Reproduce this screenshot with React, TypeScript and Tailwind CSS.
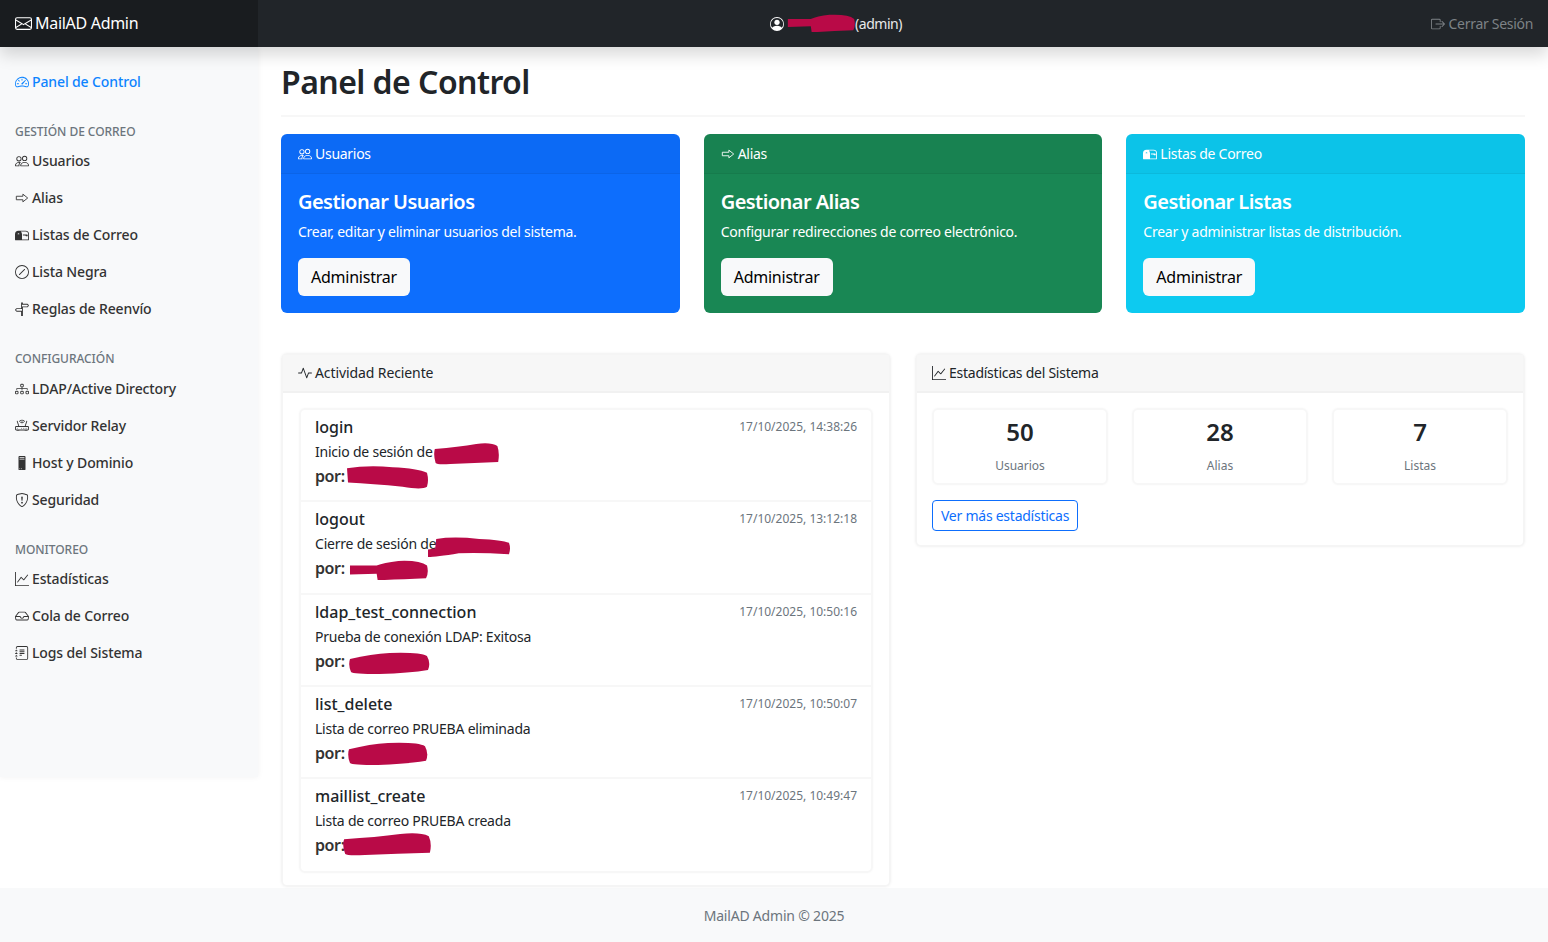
import {
  BsActivity,
  BsBoxArrowRight,
  BsDiagram3,
  BsEnvelope,
  BsGraphUp,
  BsInbox,
  BsJournalText,
  BsMailbox2,
  BsPc,
  BsPeople,
  BsPersonCircle,
  BsRouter,
  BsShieldExclamation,
  BsSignpostSplit,
  BsSlashCircle,
  BsSpeedometer2,
} from 'react-icons/bs'
import type { ReactNode } from 'react'

function AliasIcon({ className = '' }: { className?: string }) {
  return (
    <svg viewBox="0 0 16 16" width="14" height="14" fill="none" stroke="currentColor" strokeWidth="1" className={className}>
      <path d="M1.5 6h7.5V3.6L14.5 8 9 12.4V10H1.5z" />
    </svg>
  )
}

// censored names in the screenshot, hand scribbled marks
function Redact({ className, d }: { className: string; d: string }) {
  return (
    <svg viewBox="0 0 80 22" preserveAspectRatio="none" className={`absolute ${className}`}>
      <path d={d} fill="#b90a47" />
    </svg>
  )
}

const blobRound = 'M1 6 Q30 4 52 1 Q70 -1 78 3 Q81 10 79 19 Q50 20 20 21 Q4 22 2 20 Q-1 12 1 6z'
const blobTail = 'M0 3 Q20 0 45 2 Q70 3 79 7 Q81 14 79 20 Q74 23 55 20 Q25 17 1 16z'
const blobStep = 'M1 6 L28 6 Q35 3 50 1 Q72 0 79 6 Q81 14 78 20 Q55 21 36 22 L29 22 L28 15 L1 16z'
const blobLift = 'M8 2 Q25 -1 50 2 Q72 3 79 6 Q81 12 79 18 Q50 16 30 17 Q8 21 0 21 L0 13 L7 12z'
const blobFull = 'M1 7 Q22 2 40 1 Q70 0 77 4 Q81 11 78 18 Q60 21 30 22 Q4 22 2 20 Q-1 13 1 7z'

function NavItem({ icon, label, active }: { icon: ReactNode; label: string; active?: boolean }) {
  return (
    <a
      className={`flex h-[37px] items-center gap-[3px] pl-[15px] text-sm font-medium tracking-[-0.12px] ${active ? 'text-[#0d84ff]' : 'text-[#333333]'}`}
    >
      <span className="flex w-[14px] justify-center text-sm">{icon}</span>
      {label}
    </a>
  )
}

function SectionTitle({ children, className = '' }: { children: ReactNode; className?: string }) {
  return <h6 className={`pl-[15px] text-xs font-medium tracking-[-0.05px] text-[#6c757d] ${className}`}>{children}</h6>
}

function ActionCard({
  color,
  header,
  icon,
  title,
  text,
}: {
  color: string
  header: string
  icon: ReactNode
  title: string
  text: string
}) {
  return (
    <div className={`h-[179px] overflow-hidden rounded-md text-white ${color}`}>
      <div className="flex h-10 items-center gap-[3px] border-b border-black/5 bg-black/[0.03] px-[17px] text-sm tracking-[-0.28px]">
        {icon}
        {header}
      </div>
      <div className="px-[17px] pt-4">
        <h5 className="text-xl leading-6 font-semibold tracking-[-0.55px]">{title}</h5>
        <p className="mt-[7px] text-sm leading-[21px] tracking-[-0.26px]">{text}</p>
        <button className="mt-[16px] h-[38px] rounded-md bg-[#f8f9fa] px-[13px] text-base tracking-[-0.24px] text-black">Administrar</button>
      </div>
    </div>
  )
}

function LogRow({ title, time, text }: { title: string; time: string; text: string }) {
  return (
    <div className="relative h-[92.25px] border-b-2 border-[#f7f7f7] pt-[6px] pr-[14px] pl-[14px] last:border-b-0">
      <div className="flex items-start justify-between">
        <h5 className="text-base leading-[22px] font-medium text-[#212529]">{title}</h5>
        <small className="mt-[1px] text-xs leading-[20px] text-[#6c757d]">{time}</small>
      </div>
      <p className="mt-[3px] text-sm leading-[21px] tracking-[-0.22px] text-[#212529]">{text}</p>
      <p className="mt-[2px] text-base leading-[24px] font-semibold tracking-[-0.4px] text-[#333333]">por:</p>
    </div>
  )
}

function StatBox({ value, label }: { value: string; label: string }) {
  return (
    <div className="h-[77px] rounded-md border-2 border-[#f7f7f7] pt-[8px] text-center shadow-[0_0_2px_rgba(0,0,0,0.04)]">
      <div className="text-2xl leading-7 font-semibold text-[#212529]">{value}</div>
      <div className="mt-[11px] text-xs leading-[18px] text-[#6c757d]">{label}</div>
    </div>
  )
}

export default function App() {
  return (
    <div className="min-h-[942px] bg-white font-['Noto_Sans',sans-serif] text-[#212529]">
      <header className="relative z-10 flex h-[47px] items-center bg-[#212529] shadow-[0_8px_16px_rgba(0,0,0,0.15)]">
        <a className="flex h-full w-[258px] items-center gap-[3px] bg-[#191c1f] pb-[1px] pl-[15px] text-base tracking-[-0.3px] text-white">
          <BsEnvelope className="h-[17px] w-[17px]" />
          MailAD Admin
        </a>
        <div className="flex flex-1 items-center pl-[512px] text-sm tracking-[-0.45px] text-[#e8e9ea]">
          <BsPersonCircle className="h-[14px] w-[14px] text-white" />
          <span className="ml-[71px]">(admin)</span>
        </div>
        <a className="flex items-center gap-[4px] pr-[15px] text-sm tracking-[-0.3px] text-[#7d8286]">
          <BsBoxArrowRight className="h-[14px] w-[14px]" />
          Cerrar Sesión
        </a>
        <Redact className="top-[14px] left-[787px] h-[18px] w-[68px]" d={blobStep} />
      </header>

      <div className="flex items-start">
        <aside className="h-[730px] w-[258px] shrink-0 bg-[#f8f9fa] pt-4 shadow-[0_0_6px_rgba(0,0,0,0.06)]">
          <NavItem active icon={<BsSpeedometer2 />} label="Panel de Control" />
          <SectionTitle className="mt-[23px] mb-[1px] leading-[18px]">GESTIÓN DE CORREO</SectionTitle>
          <NavItem icon={<BsPeople />} label="Usuarios" />
          <NavItem icon={<AliasIcon />} label="Alias" />
          <NavItem icon={<BsMailbox2 />} label="Listas de Correo" />
          <NavItem icon={<BsSlashCircle />} label="Lista Negra" />
          <NavItem icon={<BsSignpostSplit />} label="Reglas de Reenvío" />
          <SectionTitle className="mt-[23px] mb-[2px] leading-[18px]">CONFIGURACIÓN</SectionTitle>
          <NavItem icon={<BsDiagram3 />} label="LDAP/Active Directory" />
          <NavItem icon={<BsRouter />} label="Servidor Relay" />
          <NavItem icon={<BsPc />} label="Host y Dominio" />
          <NavItem icon={<BsShieldExclamation />} label="Seguridad" />
          <SectionTitle className="mt-[23px] mb-[1px] leading-[18px]">MONITOREO</SectionTitle>
          <NavItem icon={<BsGraphUp />} label="Estadísticas" />
          <NavItem icon={<BsInbox />} label="Cola de Correo" />
          <NavItem icon={<BsJournalText />} label="Logs del Sistema" />
        </aside>

        <main className="flex-1 px-[23px] pb-px">
          <div className="flex h-[70px] items-start border-b-2 border-[#f7f7f7] pt-4">
            <h1 className="text-[32px] leading-[38px] font-semibold tracking-[-0.55px] text-[#212529]">Panel de Control</h1>
          </div>
          <div className="mt-[17px] grid grid-cols-3 gap-6">
            <ActionCard color="bg-[#0d6efd]" header="Usuarios" icon={<BsPeople />} title="Gestionar Usuarios" text="Crear, editar y eliminar usuarios del sistema." />
            <ActionCard color="bg-[#198754]" header="Alias" icon={<AliasIcon />} title="Gestionar Alias" text="Configurar redirecciones de correo electrónico." />
            <ActionCard color="bg-[#0dcaf0]" header="Listas de Correo" icon={<BsMailbox2 />} title="Gestionar Listas" text="Crear y administrar listas de distribución." />
          </div>

          <div className="mt-10 grid grid-cols-2 items-start gap-6">
            <section className="relative h-[534px] rounded-md border-2 border-[#f5f5f5] shadow-[0_0_3px_rgba(0,0,0,0.05)]">
              <div className="flex h-[38px] items-center gap-[3px] border-b-2 border-[#f1f1f1] bg-[#f7f7f7] px-[15px] text-sm tracking-[-0.1px]">
                <BsActivity />
                Actividad Reciente
              </div>
              <div className="mx-4 mt-[15px] rounded-md border-2 border-[#f7f7f7] shadow-[0_0_2px_rgba(0,0,0,0.04)]">
                <LogRow title="login" time="17/10/2025, 14:38:26" text="Inicio de sesión de" />
                <LogRow title="logout" time="17/10/2025, 13:12:18" text="Cierre de sesión de" />
                <LogRow title="ldap_test_connection" time="17/10/2025, 10:50:16" text="Prueba de conexión LDAP: Exitosa" />
                <LogRow title="list_delete" time="17/10/2025, 10:50:07" text="Lista de correo PRUEBA eliminada" />
                <LogRow title="maillist_create" time="17/10/2025, 10:49:47" text="Lista de correo PRUEBA creada" />
              </div>
              <Redact className="top-[88px] left-[151px] h-[22px] w-[65px]" d={blobRound} />
              <Redact className="top-[110px] left-[64px] h-[24px] w-[81px]" d={blobTail} />
              <Redact className="top-[182px] left-[145px] h-[21px] w-[82px]" d={blobLift} />
              <Redact className="top-[205px] left-[66px] h-[20px] w-[79px]" d={blobStep} />
              <Redact className="top-[297px] left-[66px] h-[22px] w-[81px]" d={blobFull} />
              <Redact className="top-[387px] left-[65px] h-[23px] w-[80px]" d={blobFull} />
              <Redact className="top-[478px] left-[60px] h-[23px] w-[88px]" d={blobRound} />
            </section>

            <section className="h-[194px] rounded-md border-2 border-[#f5f5f5] shadow-[0_0_3px_rgba(0,0,0,0.05)]">
              <div className="flex h-[38px] items-center gap-[3px] border-b-2 border-[#f1f1f1] bg-[#f7f7f7] px-[15px] text-sm tracking-[-0.25px]">
                <BsGraphUp />
                Estadísticas del Sistema
              </div>
              <div className="px-[15px] pt-[15px]">
                <div className="grid grid-cols-3 gap-6">
                  <StatBox value="50" label="Usuarios" />
                  <StatBox value="28" label="Alias" />
                  <StatBox value="7" label="Listas" />
                </div>
                <button className="mt-[15px] h-[31px] rounded border border-[#0d6efd] px-2 text-sm tracking-[-0.25px] text-[#0d6efd]">Ver más estadísticas</button>
              </div>
            </section>
          </div>
        </main>
      </div>

      <footer className="h-[54px] bg-[#f8f9fa] text-center text-sm leading-[56px] tracking-[-0.2px] text-[#6c757d]">
        MailAD Admin © 2025
      </footer>
    </div>
  )
}
